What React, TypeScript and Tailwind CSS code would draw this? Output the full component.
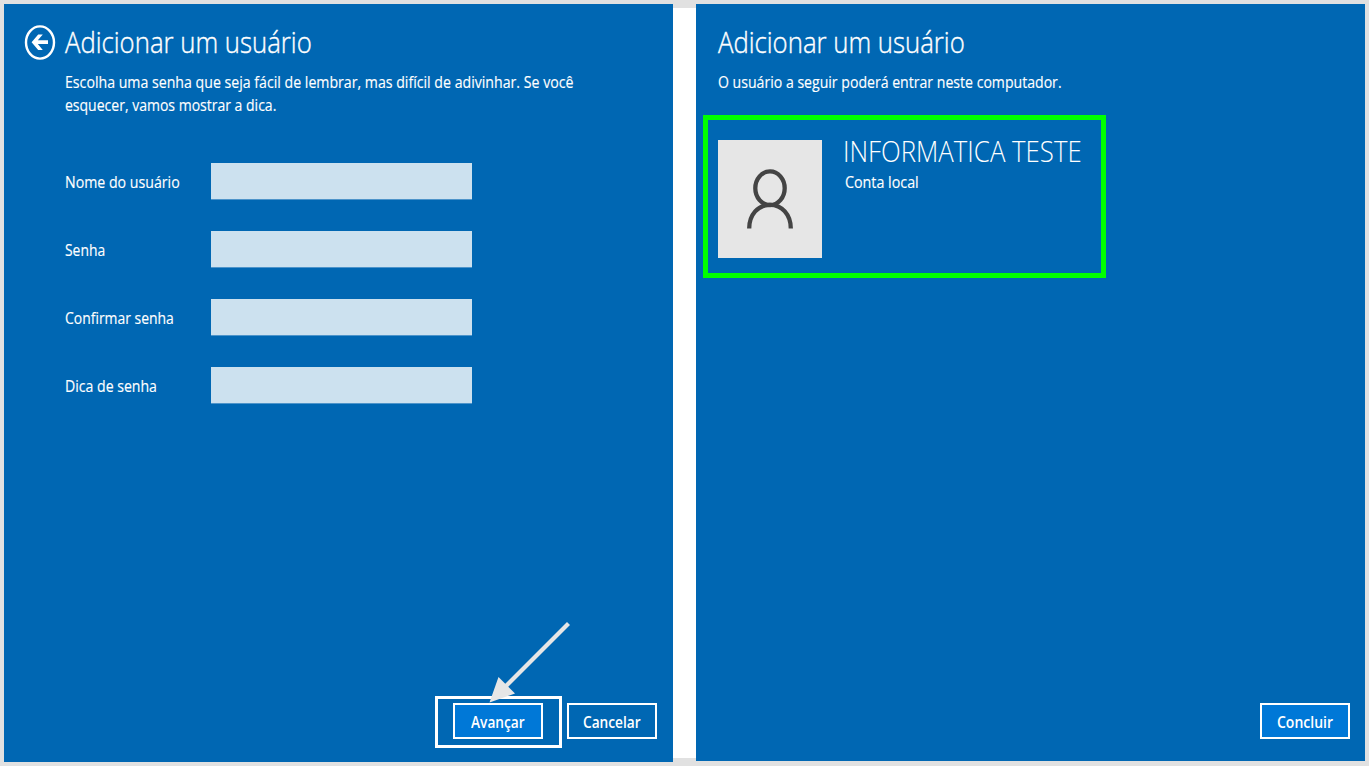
import { useLayoutEffect, useRef, useState } from 'react';
import clsx from 'clsx';

type FitTextProps = { text: string; width: number; className?: string };

/** One line of text, condensed or widened to a fixed width. */
function FitText({ text, width, className }: FitTextProps) {
  const ref = useRef<HTMLSpanElement>(null);
  const [scale, setScale] = useState(1);

  useLayoutEffect(() => {
    if (ref.current) setScale(width / ref.current.offsetWidth);
  }, [text, width]);

  return (
    <span className={clsx('flex', className)} style={{ width }}>
      <span
        ref={ref}
        className="shrink-0 origin-left whitespace-nowrap"
        style={{ transform: `scaleX(${scale})` }}
      >
        {text}
      </span>
    </span>
  );
}

const fields = [
  { label: 'Nome do usuário', width: 115 },
  { label: 'Senha', width: 40 },
  { label: 'Confirmar senha', width: 109 },
  { label: 'Dica de senha', width: 92 },
];

function Button({ label, width, primary }: { label: string; width: number; primary?: boolean }) {
  return (
    <button
      className={clsx(
        'flex h-9 w-[90px] items-center justify-center border-2 border-white pt-0.5',
        primary && 'bg-[#0078d7]',
      )}
    >
      <FitText text={label} width={width} className="text-[17px] leading-6 font-semibold" />
    </button>
  );
}

function BackIcon() {
  return (
    <svg className="h-9 w-8" viewBox="0 0 32 36" fill="none">
      <ellipse cx="16" cy="18.5" rx="14" ry="16.1" stroke="white" strokeWidth="2.4" />
      <path
        d="M7.6 18.2 L14.2 10.4 H18.8 L13.8 16.3 H24 V20.1 H13.8 L18.8 26 H14.2 Z"
        fill="white"
      />
    </svg>
  );
}

function PasswordPanel() {
  return (
    <section className="relative flex h-[758px] w-[669px] flex-col bg-[#0067b3] pr-4 pb-[23px]">
      <header className="flex items-center pt-[18px] pl-5">
        <BackIcon />
        <FitText
          text="Adicionar um usuário"
          width={247}
          className="ml-[9px] text-[30px] leading-10 font-light [-webkit-text-stroke:0.4px_white]"
        />
      </header>
      <div className="mt-[9px] pl-[60.5px] text-[17px] leading-[22.5px] [-webkit-text-stroke:0.15px_white]">
        <FitText text="Escolha uma senha que seja fácil de lembrar, mas difícil de adivinhar. Se você" width={508.5} />
        <FitText text="esquecer, vamos mostrar a dica." width={211} />
      </div>
      <form className="mt-[47px] flex flex-col gap-8 pl-[60.5px]">
        {fields.map((field) => (
          <label key={field.label} className="flex h-9 items-center">
            <span className="w-[146.5px] pt-0.5 text-[17px] leading-6 [-webkit-text-stroke:0.15px_white]">
              <FitText text={field.label} width={field.width} />
            </span>
            <input className="h-9 w-[261px] bg-[#cce1ef] shadow-[0_1px_0_#4d94ca] outline-none" />
          </label>
        ))}
      </form>
      <footer className="mt-auto flex justify-end gap-6">
        <Button label="Avançar" width={54} primary />
        <Button label="Cancelar" width={58} />
      </footer>
      <div className="pointer-events-none absolute top-[692px] left-[431px] h-[52px] w-[127px] border-3 border-white" />
      <svg className="pointer-events-none absolute top-[616px] left-[484px] h-[84px] w-[84px]" viewBox="0 0 84 84">
        <path d="M80.5 3.5 L17 67" stroke="#e6e6e6" strokeWidth="4.2" />
        <path d="M1.5 82.5 L10.5 57 L27 73.5 Z" fill="#e6e6e6" />
      </svg>
    </section>
  );
}

function UserAvatar() {
  return (
    <div className="h-[118px] w-[104px] bg-[#e6e6e6]">
      <svg viewBox="0 0 104 118" className="h-full w-full" fill="none" stroke="#444444" strokeWidth="4.3">
        <ellipse cx="52" cy="48.2" rx="14.7" ry="16.8" />
        <path d="M31.2 88.5 C31.2 74.5 40.2 64.8 52 64.8 S72.8 74.5 72.8 88.5" />
      </svg>
    </div>
  );
}

function SummaryPanel() {
  return (
    <section className="flex h-[757px] w-[669px] flex-col bg-[#0067b3] pr-[15px] pb-[22px]">
      <div className="pt-[18px] pl-[22px]">
        <FitText
          text="Adicionar um usuário"
          width={247}
          className="text-[30px] leading-10 font-light [-webkit-text-stroke:0.4px_white]"
        />
        <FitText
          text="O usuário a seguir poderá entrar neste computador."
          width={344}
          className="mt-[9px] text-[17px] leading-[22.5px] [-webkit-text-stroke:0.15px_white]"
        />
      </div>
      <div className="mt-[21.5px] ml-[7px] flex h-[163px] w-[403px] gap-[21px] border-5 border-[#00ff00] pt-5 pl-2.5">
        <UserAvatar />
        <div>
          <FitText text="INFORMATICA TESTE" width={239} className="-mt-[9px] text-[30px] leading-10 font-light" />
          <FitText
            text="Conta local"
            width={74}
            className="ml-[1.5px] text-[17px] leading-[22px] [-webkit-text-stroke:0.15px_white]"
          />
        </div>
      </div>
      <footer className="mt-auto flex justify-end">
        <Button label="Concluir" width={56} primary />
      </footer>
    </section>
  );
}

export default function App() {
  return (
    <main className="flex h-[766px] w-[1369px] items-start bg-[#e1e1e1] px-1 pt-1 font-['Open_Sans','Noto_Sans',sans-serif] text-white">
      <PasswordPanel />
      <div className="mt-1 h-[750px] w-[23px] bg-white" />
      <SummaryPanel />
    </main>
  );
}
